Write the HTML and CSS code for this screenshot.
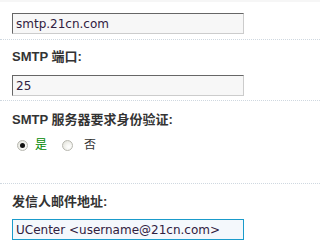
FILE: index.html
```html
<!DOCTYPE html>
<html lang="zh-CN">
<head>
<meta charset="utf-8">
<title>邮件设置</title>
<link rel="stylesheet" href="styles.css">
</head>
<body>
<div class="form">
  <div class="item item-first">
    <input class="txt" type="text" value="smtp.21cn.com">
  </div>
  <div class="item">
    <div class="label">SMTP 端口:</div>
    <input class="txt" type="text" value="25">
  </div>
  <div class="item item-tall">
    <div class="label">SMTP 服务器要求身份验证:</div>
    <div class="radios">
      <label class="opt opt-yes"><input class="radio" type="radio" name="auth" checked><span>是</span></label>
      <label class="opt opt-no"><input class="radio" type="radio" name="auth"><span>否</span></label>
    </div>
  </div>
  <div class="item item-last">
    <div class="label">发信人邮件地址:</div>
    <input class="txt txt-focus" type="text" value="UCenter &lt;username@21cn.com&gt;">
  </div>
</div>
</body>
</html>
```
FILE: styles.css
```css
html, body {
  margin: 0;
  padding: 0;
  background: #fff;
}
body {
  font-family: "DejaVu Sans", "Noto Sans CJK SC", sans-serif;
  font-size: 12px;
  color: #333;
}
.form {
  border-top: 2px solid #f6f6f6;
}
.item {
  padding: 7px 0 4px 12px;
  border-bottom: 1px dotted #cfd8e0;
}
.item-first {
  padding-top: 11px;
  padding-bottom: 5px;
}
.item-tall {
  box-sizing: border-box;
  height: 83px;
  padding-top: 9px;
  padding-bottom: 0;
}
.item-last {
  border-bottom: none;
  padding-top: 8px;
}
.label {
  font-family: "Liberation Sans", "Noto Sans CJK SC", sans-serif;
  font-size: 13px;
  font-weight: bold;
  line-height: 20px;
  margin-bottom: 8px;
  color: #333;
}
.item-last .label {
  margin-bottom: 7px;
}
.txt {
  display: block;
  box-sizing: border-box;
  width: 232px;
  height: 21px;
  margin: 0;
  padding: 0 3px;
  font-family: "DejaVu Sans", "Noto Sans CJK SC", sans-serif;
  font-size: 12px;
  color: #302040;
  background: #f7f7f7;
  border: 1px solid;
  border-color: #666 #ccc #ccc #666;
  outline: none;
}
.txt-focus {
  border-color: #1a9bcb;
  background: #f4f8fc;
}
.radios {
  display: flex;
  align-items: center;
  height: 11px;
  gap: 15px;
  padding-left: 5px;
  margin-top: 10px;
}
.opt {
  display: flex;
  align-items: center;
  gap: 7px;
  color: #333;
  font-size: 12px;
  line-height: 11px;
}
.opt-no {
  gap: 11px;
}
.opt-yes {
  color: #080;
}
.radio {
  -webkit-appearance: none;
  appearance: none;
  margin: 0;
  width: 11px;
  height: 11px;
  border-radius: 50%;
  border: 1px solid #b8b8b0;
  background: radial-gradient(circle at 65% 65%, #fff 0, #f4f4f0 40%, #dcdcd4 100%);
  box-sizing: border-box;
  position: relative;
}
.radio:checked::after {
  content: "";
  position: absolute;
  left: 2px;
  top: 2px;
  width: 5px;
  height: 5px;
  border-radius: 50%;
  background: #111;
}
```
